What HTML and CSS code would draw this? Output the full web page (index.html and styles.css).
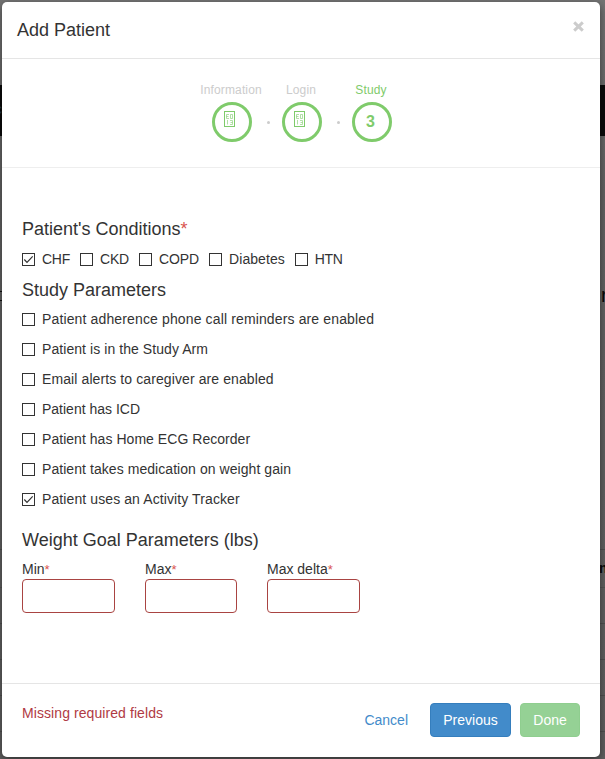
FILE: index.html
```html
<!DOCTYPE html>
<html lang="en">
<head>
<meta charset="utf-8">
<title>Add Patient</title>
<link rel="stylesheet" href="styles.css">
</head>
<body>
<div class="page-behind" aria-hidden="true"><span class="peek peek-left">c</span><span class="peek peek-title">r</span><span class="peek peek-column">n</span></div>
<main class="modal">
  <header class="modal-header">
    <h1>Add Patient</h1>
    <button class="close" type="button" aria-label="Close"><svg width="11" height="11" viewBox="0 0 11 11"><path d="M1.2 1.4 9.8 9.6M9.8 1.4 1.2 9.6"/></svg></button>
  </header>
  <nav class="steps">
    <div class="step"><span class="step-name">Information</span><span class="circle"><svg class="glyph" width="11" height="16" viewBox="0 0 11 16"><rect x=".5" y=".5" width="10" height="15"/><path d="M5 3.5H2.5V7.5H5M2.5 5.5H4.5M6.5 3.5H8.5V7.5H6.5ZM3.5 9V13.5M6 9.5H8.5V13.5H6M6.5 11.5H8.5"/></svg></span></div>
    <i class="dot"></i>
    <div class="step"><span class="step-name">Login</span><span class="circle"><svg class="glyph" width="11" height="16" viewBox="0 0 11 16"><rect x=".5" y=".5" width="10" height="15"/><path d="M5 3.5H2.5V7.5H5M2.5 5.5H4.5M6.5 3.5H8.5V7.5H6.5ZM3.5 9V13.5M6 9.5H8.5V13.5H6M6.5 11.5H8.5"/></svg></span></div>
    <i class="dot"></i>
    <div class="step current"><span class="step-name">Study</span><span class="circle"><b>3</b></span></div>
  </nav>
  <section class="modal-body">
    <h2>Patient's Conditions<em>*</em></h2>
    <div class="conditions">
      <label class="option"><span class="box"><svg width="11" height="11" viewBox="0 0 11 11"><path d="M1.3 5.5 4 8.3 9.7 2.3"/></svg></span>CHF</label>
      <label class="option"><span class="box"></span>CKD</label>
      <label class="option"><span class="box"></span>COPD</label>
      <label class="option"><span class="box"></span>Diabetes</label>
      <label class="option"><span class="box"></span>HTN</label>
    </div>
    <h2>Study Parameters</h2>
    <div class="parameters">
      <label class="option"><span class="box"></span>Patient adherence phone call reminders are enabled</label>
      <label class="option"><span class="box"></span>Patient is in the Study Arm</label>
      <label class="option"><span class="box"></span>Email alerts to caregiver are enabled</label>
      <label class="option"><span class="box"></span>Patient has ICD</label>
      <label class="option"><span class="box"></span>Patient has Home ECG Recorder</label>
      <label class="option"><span class="box"></span>Patient takes medication on weight gain</label>
      <label class="option"><span class="box"><svg width="11" height="11" viewBox="0 0 11 11"><path d="M1.3 5.5 4 8.3 9.7 2.3"/></svg></span>Patient uses an Activity Tracker</label>
    </div>
    <h2>Weight Goal Parameters (lbs)</h2>
    <div class="weights">
      <label><span>Min<em>*</em></span><input type="text"></label>
      <label><span>Max<em>*</em></span><input type="text"></label>
      <label><span>Max delta<em>*</em></span><input type="text"></label>
    </div>
  </section>
  <footer class="modal-footer">
    <p class="error">Missing required fields</p>
    <button class="btn link" type="button">Cancel</button>
    <button class="btn primary" type="button">Previous</button>
    <button class="btn success" type="button">Done</button>
  </footer>
</main>
</body>
</html>
```
FILE: styles.css
```css
* { box-sizing: border-box; }

body {
  margin: 0;
  padding: 2px 5px 2px 2px;
  height: 759px;
  overflow: hidden;
  position: relative;
  background: #696969;
  color: #333;
  font: 14px/20px "Liberation Sans", Arial, sans-serif;
}

.page-behind {
  position: absolute;
  inset: 0;
  overflow: hidden;
  background:
    linear-gradient(#505050, #505050) 0 549px / 100% 1px no-repeat,
    linear-gradient(#555, #555) 0 587px / 100% 1px no-repeat,
    linear-gradient(#505050, #505050) 0 623px / 100% 1px no-repeat,
    linear-gradient(#505050, #505050) 0 659px / 100% 1px no-repeat,
    linear-gradient(#505050, #505050) 0 695px / 100% 1px no-repeat,
    linear-gradient(#505050, #505050) 0 731px / 100% 1px no-repeat,
    linear-gradient(#111, #111) 0 291px / 2px 1px no-repeat,
    linear-gradient(#111, #111) 0 300px / 2px 1px no-repeat,
    linear-gradient(#0b0b0b, #0b0b0b) 0 85px / 100% 51px no-repeat,
    linear-gradient(#747474, #646464 25%, #606060);
}

.peek { position: absolute; color: #080808; line-height: 20px; }
.peek-left { left: -5px; top: 99px; color: #22384a; }
.peek-title { left: 601px; top: 285px; font-size: 20px; }
.peek-column { left: 599px; top: 558px; font-weight: bold; }

.modal {
  position: relative;
  display: flex;
  flex-direction: column;
  height: 755px;
  background: #fff;
  border-radius: 5px;
  box-shadow: 0 3px 9px rgba(0, 0, 0, .5);
}

.modal-header {
  display: flex;
  justify-content: space-between;
  height: 57px;
  padding: 18px 15px 0;
  border-bottom: 1px solid #e5e5e5;
}

h1, h2 { margin: 0; font-size: 18px; line-height: 20px; font-weight: normal; }

.close { width: 13px; height: 13px; padding: 0; border: 0; background: none; }
.close svg { display: block; margin: 0 1px; fill: none; stroke: #ccc; stroke-width: 3; }

.steps {
  display: flex;
  justify-content: center;
  height: 109px;
  padding: 21px 0 0 2px;
  border-bottom: 1px solid #eee;
}

.step {
  display: flex;
  flex-direction: column;
  align-items: center;
  width: 40px;
  color: #ccc;
  font-size: 12px;
}
.step-name { height: 22px; margin-right: 2px; white-space: nowrap; letter-spacing: .15px; }
.current, .circle { color: #7fcb6b; }
.circle {
  display: flex;
  align-items: center;
  justify-content: center;
  width: 40px;
  height: 40px;
  padding-right: 3px;
  border: 3px solid;
  border-radius: 50%;
  font-size: 16px;
}
.glyph { margin: 0 2px 6px 0; fill: none; stroke: currentColor; stroke-width: 1; }
.glyph path { opacity: .6; }
.dot { width: 3px; height: 3px; margin: 41px 12px 0 15px; border-radius: 50%; background: #ccc; }

.modal-body { flex: 1; padding: 51px 20px 0; }
em { color: #d9534f; font-style: normal; }

.option { display: flex; align-items: center; height: 20px; }
.box { flex: none; width: 13px; height: 13px; margin-right: 7px; border: 1px solid #333; }
.box svg { display: block; fill: none; stroke: #333; stroke-width: 1.2; }
.conditions { display: flex; gap: 10px; margin: 10px 0 11px; }
.conditions .option:nth-child(1) { letter-spacing: -.25px; }
.conditions .option:nth-child(2) { letter-spacing: -.2px; }
.conditions .option:nth-child(3) { letter-spacing: -.1px; }
.conditions .option:nth-child(4) { letter-spacing: .06px; }
.conditions .option:nth-child(5) { letter-spacing: -.4px; }
.parameters { display: flex; flex-direction: column; gap: 10px; margin: 9px 0 21px; letter-spacing: .1px; }
.parameters .option:nth-child(1) { letter-spacing: .135px; }
.parameters .option:nth-child(2) { letter-spacing: .07px; }
.parameters .option:nth-child(4) { letter-spacing: 0; }
.parameters .option:nth-child(5) { letter-spacing: .04px; }
.parameters .option:nth-child(6) { letter-spacing: .06px; }

.weights { display: grid; grid-template-columns: 93px 92px 93px; gap: 30px; margin-top: 9px; }
.weights span { display: block; height: 20px; }
.weights em { font-size: 13px; }
.weights input {
  display: block;
  width: 100%;
  height: 34px;
  border: 1px solid #a94442;
  border-radius: 4px;
  background: #fff;
}

.modal-footer {
  display: flex;
  height: 74px;
  padding: 19px 20px 0;
  border-top: 1px solid #e5e5e5;
}
.error { margin: 0 auto 0 0; color: #b03a43; letter-spacing: .08px; }
.btn {
  height: 34px;
  padding: 0 12px;
  border: 1px solid transparent;
  border-radius: 4px;
  background: none;
  color: #fff;
  font: inherit;
}
.link { margin-right: 9px; color: #428bca; }
.primary { width: 81px; margin-right: 9px; background: #428bca; border-color: #357ebd; }
.success { width: 60px; background: #95d195; border-color: #8fce8f; }
```
